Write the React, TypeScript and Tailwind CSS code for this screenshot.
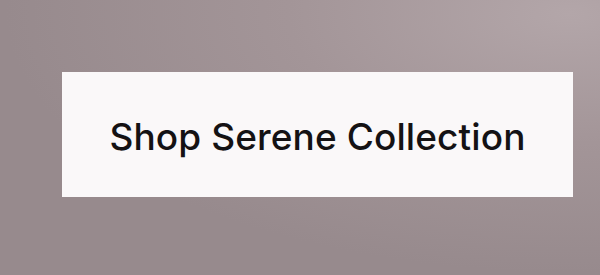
import React from 'react';

export default function App() {
  return (
    <div className="relative h-[275px] w-[600px] overflow-hidden bg-[#978a8d]">
      {/* soft highlight in the top right corner */}
      <div className="pointer-events-none absolute inset-0 bg-[radial-gradient(ellipse_at_95%_5%,#b3a6a9_0%,#a39598_35%,rgba(151,138,141,0)_70%)]" />
      <div className="relative flex h-full items-start pt-[72px] pl-[62px]">
        <button className="flex h-[125px] w-[511px] items-center justify-center bg-[#faf8f9] pt-[4px] text-[37px] font-medium tracking-[0.1px] text-[#141214] [font-family:Inter,'Liberation_Sans',sans-serif]">
          Shop Serene Collection
        </button>
      </div>
    </div>
  );
}
